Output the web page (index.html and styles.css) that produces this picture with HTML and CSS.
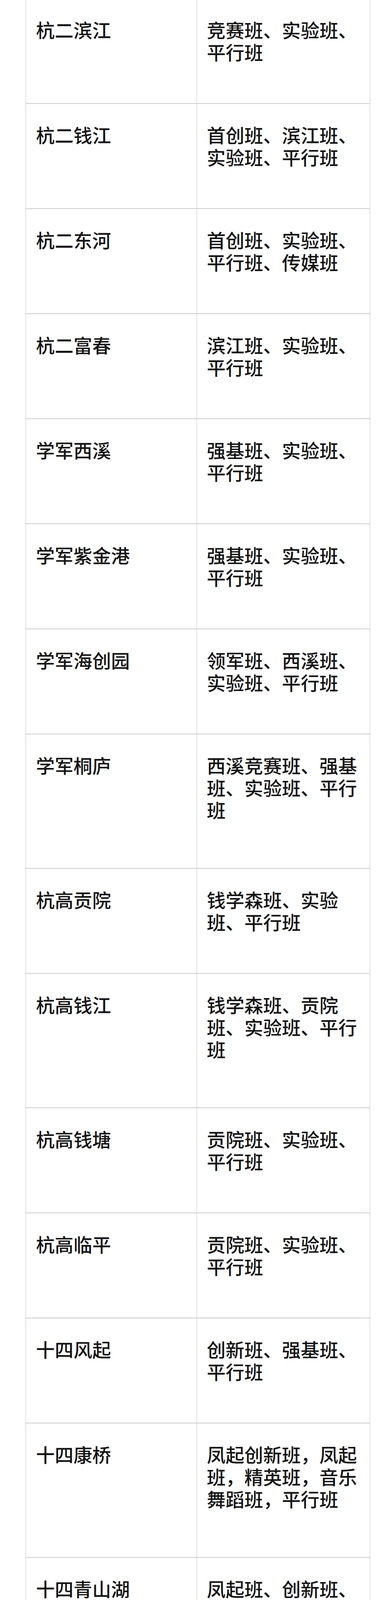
FILE: index.html
```html
<!DOCTYPE html>
<html lang="zh-CN">
<head>
<meta charset="utf-8">
<title>学校班型</title>
<link rel="stylesheet" href="styles.css">
</head>
<body>
<table class="classes">
  <colgroup><col class="col-school"><col class="col-types"></colgroup>
  <tbody>
    <tr><td>杭二滨江</td><td>竞赛班、实验班、平行班</td></tr>
    <tr><td>杭二钱江</td><td>首创班、滨江班、实验班、平行班</td></tr>
    <tr><td>杭二东河</td><td>首创班、实验班、平行班、传媒班</td></tr>
    <tr><td>杭二富春</td><td>滨江班、实验班、平行班</td></tr>
    <tr><td>学军西溪</td><td>强基班、实验班、平行班</td></tr>
    <tr><td>学军紫金港</td><td>强基班、实验班、平行班</td></tr>
    <tr><td>学军海创园</td><td>领军班、西溪班、实验班、平行班</td></tr>
    <tr class="three"><td>学军桐庐</td><td>西溪竞赛班、强基班、实验班、平行班</td></tr>
    <tr><td>杭高贡院</td><td>钱学森班、实验班、平行班</td></tr>
    <tr class="three"><td>杭高钱江</td><td>钱学森班、贡院班、实验班、平行班</td></tr>
    <tr><td>杭高钱塘</td><td>贡院班、实验班、平行班</td></tr>
    <tr><td>杭高临平</td><td>贡院班、实验班、平行班</td></tr>
    <tr><td>十四风起</td><td>创新班、强基班、平行班</td></tr>
    <tr class="three"><td>十四康桥</td><td>凤起创新班，凤起班，精英班，音乐舞蹈班，平行班</td></tr>
    <tr><td>十四青山湖</td><td>凤起班、创新班、平行班</td></tr>
    <tr><td>余高</td><td>竞赛班、创新班、实验班、平行班</td></tr>
    <tr><td>余二高</td><td>自招班、英才班、实验班、平行班</td></tr>
  </tbody>
</table>
</body>
</html>
```
FILE: styles.css
```css
html, body {
  margin: 0;
  padding: 0;
  background: #ffffff;
}

body {
  font-family: "Noto Sans CJK SC", "Noto Sans", sans-serif;
  color: #141414;
}

.classes {
  border-collapse: collapse;
  table-layout: fixed;
  width: 880px;
  margin: -5px 0 0 65px;
}

.col-school { width: 437px; }
.col-types { width: 443px; }

.classes td {
  vertical-align: top;
  font-size: 48px;
  font-weight: 500;
  line-height: 57px;
  padding: 50px 25px 103px 25px;
  border-left: 2px solid #e1e1e1;
  border-right: 2px solid #e1e1e1;
  border-top: 2px solid #cdcdcd;
  border-bottom: 2px solid #cdcdcd;
  line-break: strict;
}

.classes tr.three td {
  padding-bottom: 121px;
}
```
